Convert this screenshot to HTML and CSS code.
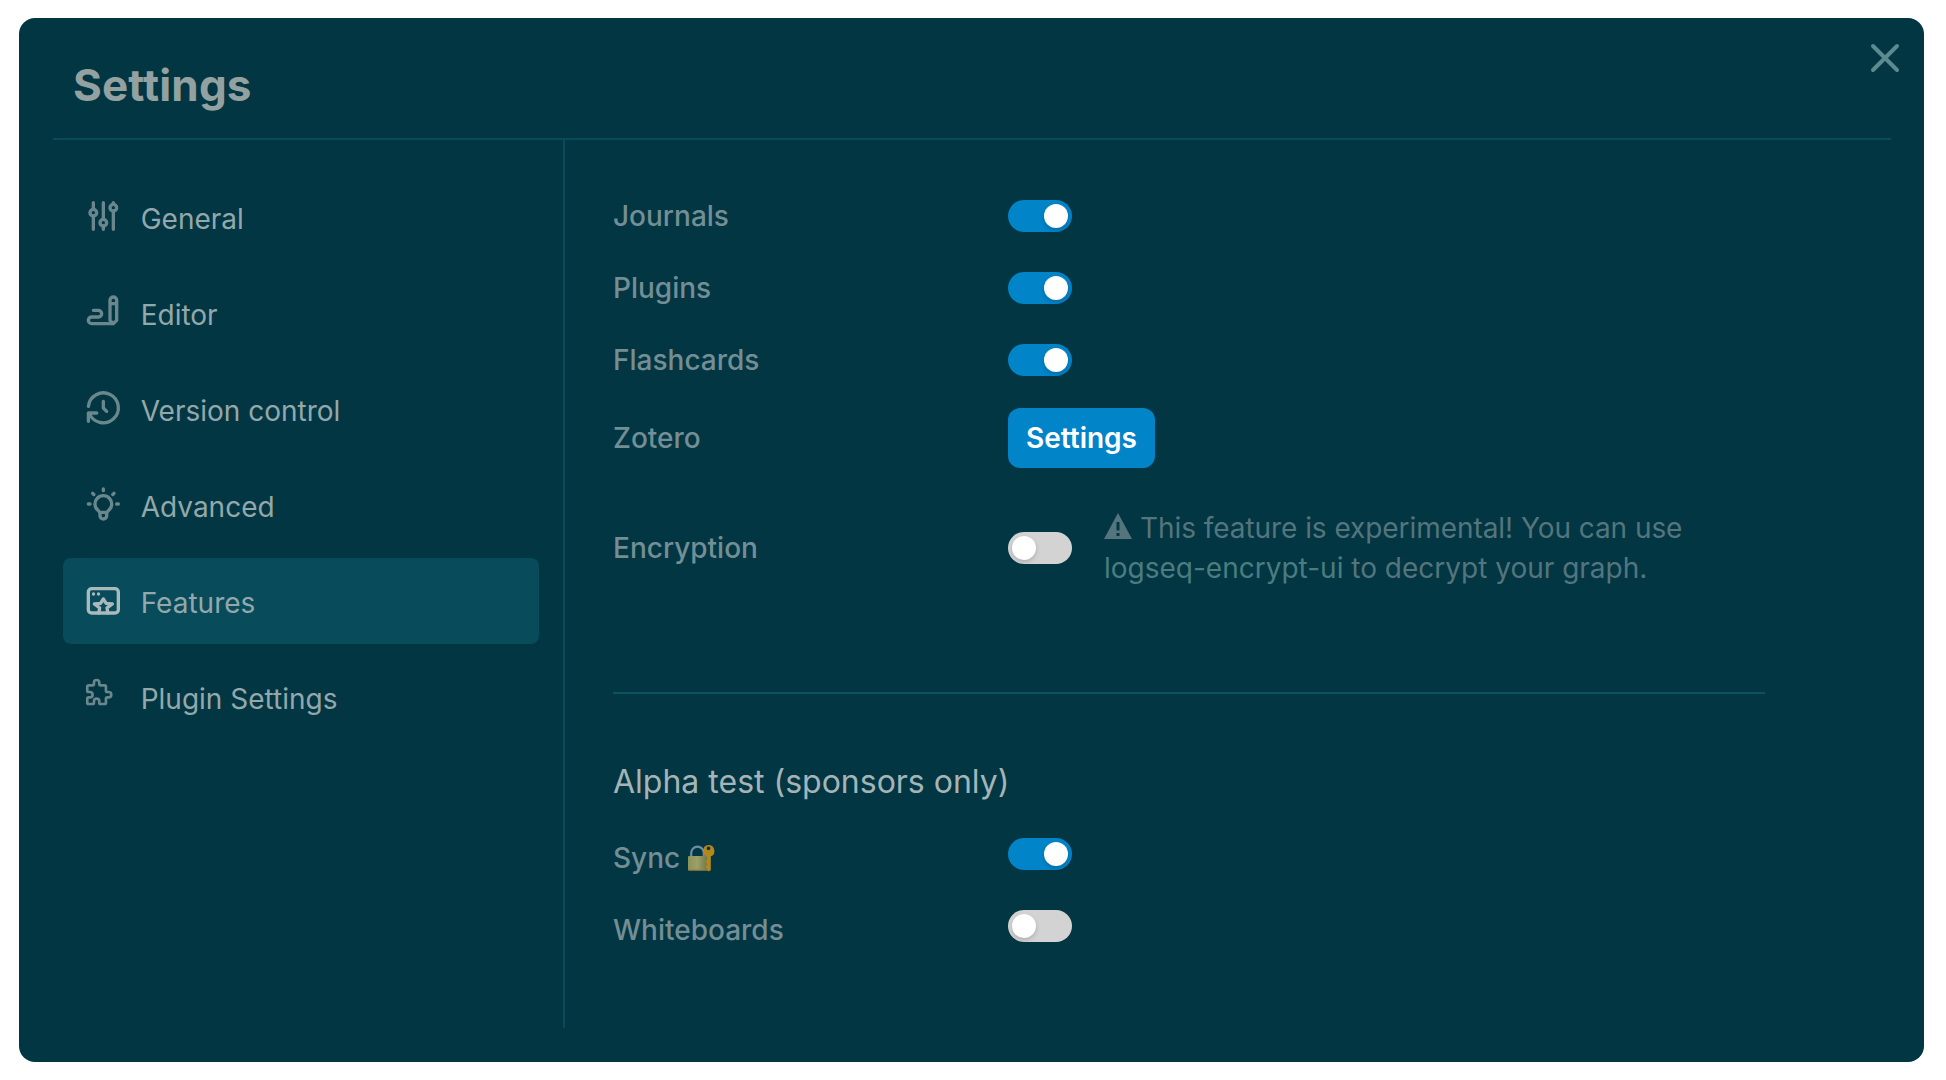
FILE: index.html
```html
<!DOCTYPE html>
<html lang="en">
<head>
<meta charset="utf-8">
<title>Settings</title>
<link rel="stylesheet" href="styles.css">
</head>
<body>
<main class="panel">
  <header class="header">
    <h1 class="title">Settings</h1>
    <button class="close" aria-label="Close"><svg viewBox="0 0 24 24" width="48" height="48"><path d="M6 18L18 6M6 6l12 12"/></svg></button>
  </header>
  <div class="body">
    <nav class="nav">
      <a class="item"><svg class="icon" viewBox="-.2 0 24 24"><circle cx="6" cy="10" r="2"/><path d="M6 4v4M6 12v8"/><circle cx="12" cy="16" r="2"/><path d="M12 4v10M12 18v2"/><circle cx="18" cy="7" r="2"/><path d="M18 4v1M18 9v11"/></svg><span>General</span></a>
      <a class="item"><svg class="icon" viewBox="-.2 0 24 24"><path d="M20 17v-12c0 -1.121 -.879 -2 -2 -2s-2 .879 -2 2v12l2 2l2 -2zM16 7h4M18 19h-13a2 2 0 1 1 0 -4h4a2 2 0 1 0 0 -4h-3"/></svg><span>Editor</span></a>
      <a class="item"><svg class="icon" viewBox="-.2 0 24 24"><path d="M12 8v4l2 2M3.05 11a9 9 0 1 1 .5 4m-.5 5v-5h5"/></svg><span>Version control</span></a>
      <a class="item"><svg class="icon" viewBox="-.2 0 24 24"><path d="M3 12h1m8 -9v1m8 8h1m-15.4 -6.4l.7 .7m12.1 -.7l-.7 .7M9 16a5 5 0 1 1 6 0a3.5 3.5 0 0 0 -1 3a2 2 0 0 1 -4 0a3.5 3.5 0 0 0 -1 -3M9.7 17h4.6"/></svg><span>Advanced</span></a>
      <a class="item active"><svg class="icon" viewBox="-.2 0 24 24"><rect x="3" y="5.2" width="18" height="14.6" rx="2"/><path d="M6.1 8.4h.01M9.1 8.4h.01"/><path d="M9.3 19.800l.5-3.100-3.200-2.300 3.700-.4L12 11.400l1.700 2.600 3.700.4-3.200 2.300.5 3.100"/></svg><span>Features</span></a>
      <a class="item"><svg class="icon small" viewBox="-.2 0 24 24"><path d="M4 7h3a1 1 0 0 0 1 -1v-1a2 2 0 0 1 4 0v1a1 1 0 0 0 1 1h3a1 1 0 0 1 1 1v3a1 1 0 0 0 1 1h1a2 2 0 0 1 0 4h-1a1 1 0 0 0 -1 1v3a1 1 0 0 1 -1 1h-3a1 1 0 0 1 -1 -1v-1a2 2 0 0 0 -4 0v1a1 1 0 0 1 -1 1h-3a1 1 0 0 1 -1 -1v-3a1 1 0 0 1 1 -1h1a2 2 0 0 0 0 -4h-1a1 1 0 0 1 -1 -1v-3a1 1 0 0 1 1 -1"/></svg><span>Plugin Settings</span></a>
    </nav>
    <section class="content">
      <div class="row"><span class="label">Journals</span><span class="toggle on"></span></div>
      <div class="row"><span class="label">Plugins</span><span class="toggle on"></span></div>
      <div class="row"><span class="label">Flashcards</span><span class="toggle on"></span></div>
      <div class="row zotero"><span class="label">Zotero</span><button class="button">Settings</button></div>
      <div class="row encryption"><span class="label">Encryption</span><span class="toggle"></span>
        <p class="note"><svg class="warn" viewBox="0 0 28 26" width="28" height="26"><path fill-rule="evenodd" d="M14 0L28 26H0zM12.500 9v8.500h3V9zM12.500 20v3h3v-3z"/></svg><span class="lead">This feature is experimental! You can use</span><br><a class="link">logseq-encrypt-ui</a> to decrypt your graph.</p>
      </div>
      <hr class="rule">
      <h2 class="subtitle">Alpha test (sponsors only)</h2>
      <div class="row alpha"><span class="label">Sync <svg class="lock" viewBox="0 0 28 28" width="28" height="28"><defs><linearGradient id="brass"><stop offset="0" stop-color="#8d9257"/><stop offset=".4" stop-color="#9da06a"/><stop offset="1" stop-color="#5f6a3c"/></linearGradient></defs><path d="M4.200 13V9a6.300 6.300 0 0 1 12.600 0v4" fill="none" stroke="#6d8ca3" stroke-width="2.200"/><rect x="1" y="12" width="23" height="14.500" rx="1" fill="url(#brass)"/><path d="M1.500 26h22" stroke="#a27b33" stroke-width="1"/><path fill="#b5871a" fill-rule="evenodd" d="M21.500 1a6 6 0 0 1 2 11.600V25.500L21.700 27.500l-1.500-1.500v-1.500l-1.200-1v-1.500l1.200-1v-1.500l-1.200-1v-1.500l1.200-1v-3.300A6 6 0 0 1 21.500 1zM21.500 2.600a1.800 1.800 0 1 0 .01 0z"/></svg></span><span class="toggle on"></span></div>
      <div class="row alpha"><span class="label">Whiteboards</span><span class="toggle"></span></div>
    </section>
  </div>
</main>
</body>
</html>
```
FILE: styles.css
```css
* { box-sizing: border-box; }
body {
  margin: 0;
  height: 1080px;
  padding: 18px 22px 18px 19px;
  background: #fff;
  font: 400 28px/40px Inter, "Liberation Sans", sans-serif;
  font-variant-ligatures: none;
  overflow: hidden;
}
.panel {
  width: 1905px;
  height: 1044px;
  padding: 0 33px 34px 34px;
  border-radius: 16px;
  background: #023643;
  display: flex;
  flex-direction: column;
}
.header {
  flex: none;
  height: 122px;
  border-bottom: 2px solid #084b5a;
  display: flex;
  justify-content: space-between;
  align-items: flex-start;
}
.title {
  margin: 37px 0 0 20px;
  font-size: 44px;
  line-height: 60px;
  font-weight: 700;
  letter-spacing: 0.15px;
  color: #93a1a1;
}
.close {
  margin: 16px -18px 0 0;
  padding: 0;
  border: 0;
  background: none;
  height: 48px;
}
.close svg { display: block; fill: none; stroke: #5b8a8f; stroke-width: 2; stroke-linecap: round; }
.body { flex: 1; display: flex; }
.nav {
  width: 512px;
  padding: 34px 24px 0 10px;
  border-right: 2px solid #084b5a;
  display: flex;
  flex-direction: column;
  gap: 10px;
}
.item {
  height: 86px;
  padding: 0 20px;
  border-radius: 8px;
  display: flex;
  align-items: center;
  gap: 17.7px;
  color: #93a8ab;
}
.item span { padding-top: 4px; }
.active { background: #084b5a; }
.icon {
  width: 40px;
  height: 40px;
  margin-top: -3px;
  fill: none;
  stroke: #69878d;
  stroke-width: 2;
  stroke-linecap: round;
  stroke-linejoin: round;
}
.active .icon { stroke: #a9b9bc; }
.small { width: 32px; height: 32px; margin: -10px 8px 0 0; }
.content { padding: 40px 0 0 48px; width: 1200px; }
.row { display: flex; align-items: center; height: 72px; }
.label { width: 395px; flex: none; font-weight: 500; color: #738e94; }
.toggle {
  width: 64px;
  height: 32px;
  padding: 4px;
  border-radius: 16px;
  background: #d3d3d3;
  display: flex;
  flex: none;
}
.toggle::before {
  content: "";
  width: 24px;
  height: 24px;
  border-radius: 50%;
  background: #fff;
  box-shadow: 0 2px 4px rgba(0, 0, 0, .18);
}
.on { background: #0284c9; justify-content: flex-end; }
.zotero { height: 84px; }
.button {
  width: 147px;
  height: 60px;
  padding: 0;
  border: 0;
  border-radius: 12px;
  background: #0284c9;
  color: #fff;
  font: 600 28px/40px Inter, "Liberation Sans", sans-serif;
  font-variant-ligatures: none;
}
.encryption { height: 80px; margin-top: 28px; }
.note { margin: 0 0 0 32px; color: #54757d; white-space: nowrap; }
.warn { fill: #54757d; vertical-align: -1px; margin-right: 8px; }
.lead { letter-spacing: -0.06px; }
.link { color: #4a7d80; }
.rule { margin: 104px 0 0; width: 1152px; border: 0; height: 2px; background: #0b5162; }
.subtitle { margin: 68px 0 16px; font-size: 32px; line-height: 40px; font-weight: 400; color: #a4b4b7; }
.alpha { height: 72px; }
.alpha .label { padding-top: 8px; }
.lock { vertical-align: -4px; margin-left: -1px; }
```
